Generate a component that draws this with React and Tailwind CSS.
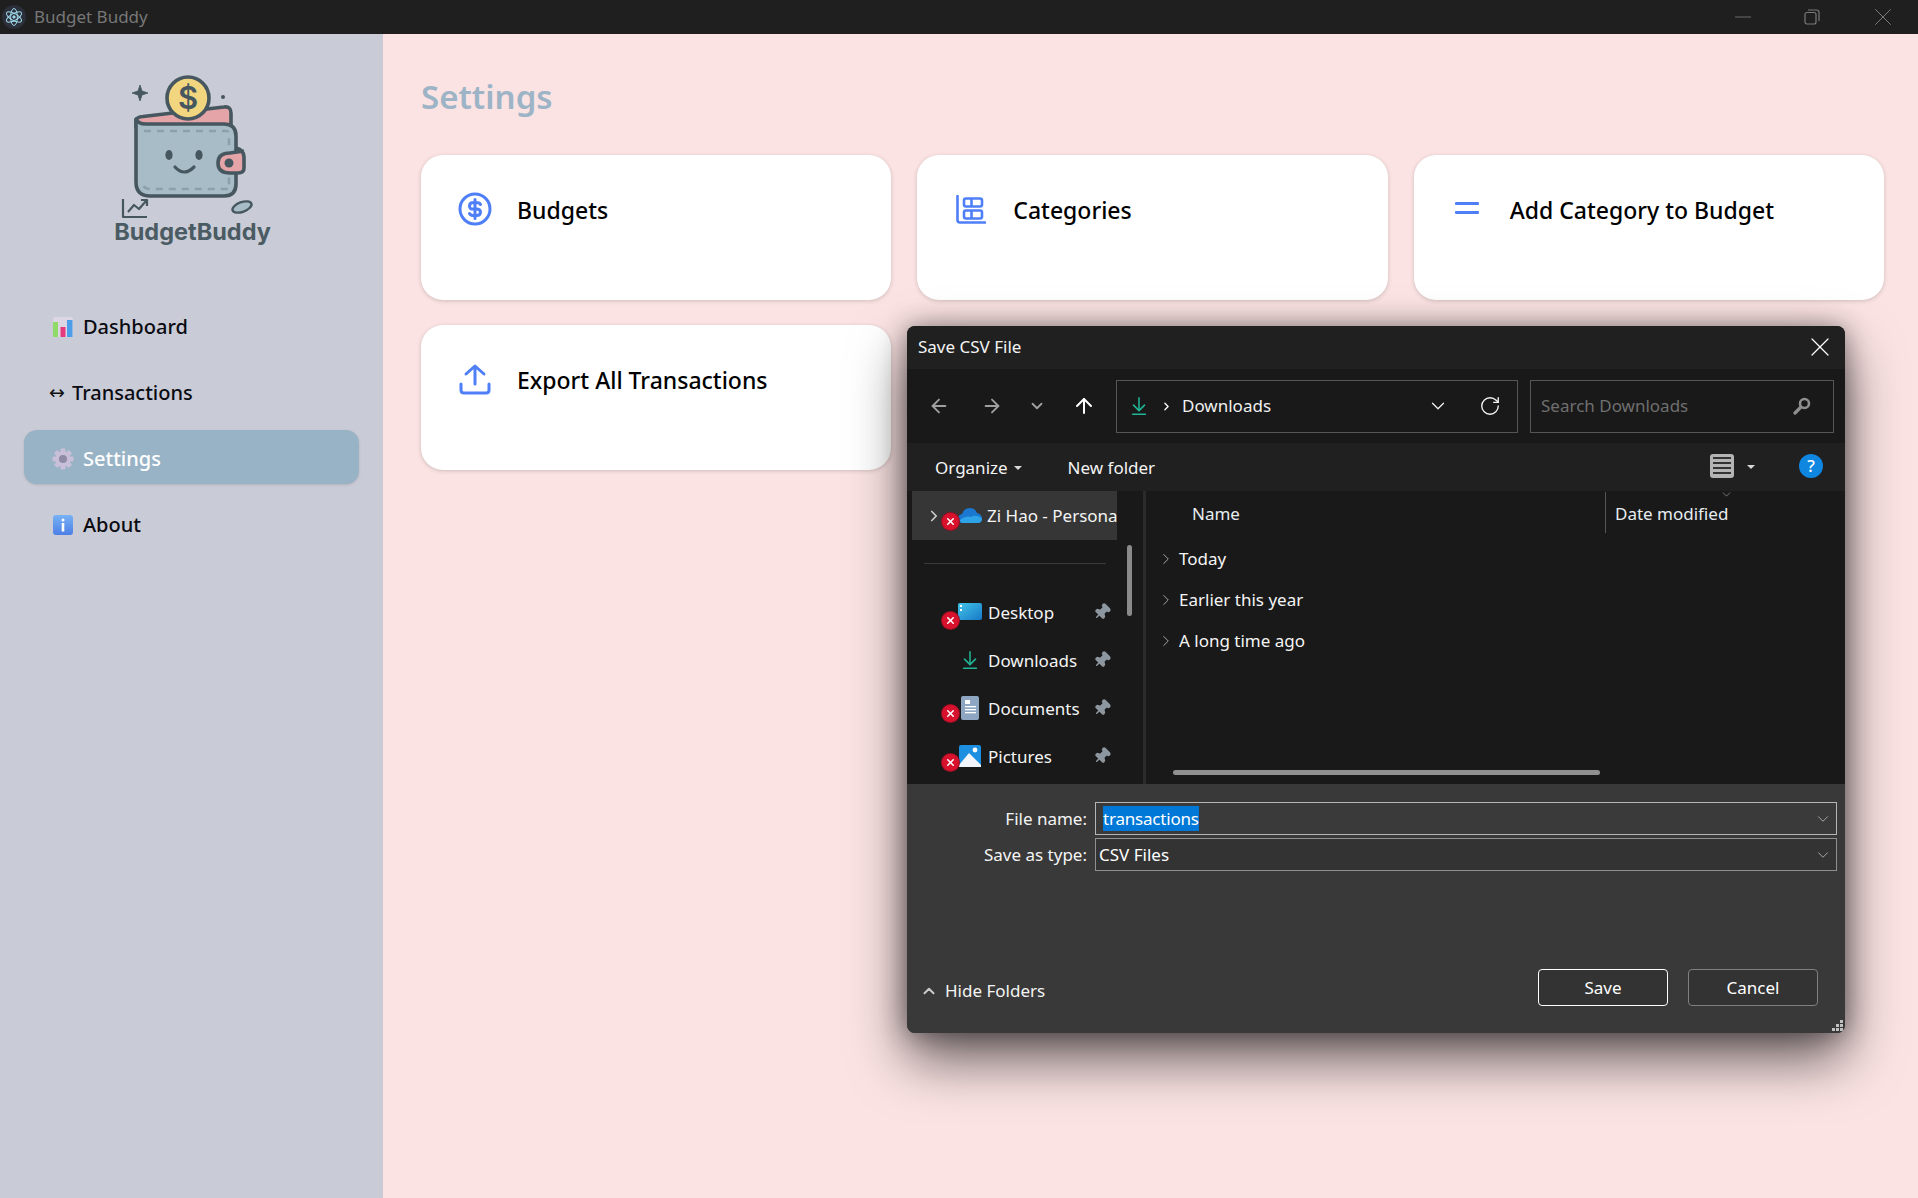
import React from "react";
import { ArrowLeft, ArrowRight, ArrowUp, ChevronDown, ChevronRight, ChevronUp, RotateCw, X, Minus, Pin, ArrowDownToLine } from "lucide-react";

const FONT = "font-['Noto_Sans','Open_Sans',sans-serif]";

function Logo() {
  const s = "#46575f";
  return (
    <svg width="136" height="148" viewBox="0 0 136 148" className="block">
      <path d="M20 12 L22 18 L28 20 L22 22 L20 28 L18 22 L12 20 L18 18 Z" fill={s} stroke={s} strokeWidth="0.8" strokeLinejoin="round" />
      <circle cx="103" cy="24" r="2" fill={s} />
      <path d="M16 47 Q17 44 23 43.5 L104 34 Q111 33 111 40 V54 H16 Z" fill="#e5a5a8" stroke={s} strokeWidth="3.6" strokeLinejoin="round" />
      <circle cx="68" cy="25" r="21" fill="#f2d57f" stroke={s} strokeWidth="3.6" />
      <text x="68" y="36" textAnchor="middle" fontFamily="Inter, sans-serif" fontSize="31" fontWeight="600" fill={s}>$</text>
      <path d="M16 46 Q18 51 26 51 H104 Q116 51 116 63 V111 Q116 123 104 123 H30 Q16 123 16 109 Z" fill="#a8bcc7" stroke={s} strokeWidth="3.6" strokeLinejoin="round" />
      <path d="M24 58 H106 Q109 58 109 61 V116 H30 Q23 116 23 110" fill="none" stroke="#8aa0aa" strokeWidth="2.6" strokeDasharray="7 6" />
      <ellipse cx="49" cy="82" rx="3.6" ry="5" fill={s} />
      <ellipse cx="79" cy="82" rx="3.6" ry="5" fill={s} />
      <path d="M55 94 Q64 104 74 94" fill="none" stroke={s} strokeWidth="3.2" strokeLinecap="round" />
      <path d="M116 75 Q124 77 124 84 V95 Q124 100 118 100 H110 Q98 100 98 90 Q98 80 110 80 L124 78" fill="#e5a5a8" stroke={s} strokeWidth="3.6" strokeLinejoin="round" />
      <circle cx="109" cy="90" r="4.5" fill={s} />
      <path d="M3 126 V144 H27 M8 139 L14 132 L19 136 L26 128 M21 127 H27 V133" fill="none" stroke={s} strokeWidth="2.2" strokeLinejoin="round" />
      <ellipse cx="122" cy="134" rx="10" ry="4.8" transform="rotate(-20 122 134)" fill="#a8bcc7" stroke={s} strokeWidth="2.4" />
    </svg>
  );
}

function BarEmoji() {
  return (
    <svg width="22" height="22" viewBox="0 0 22 22">
      <rect x="1" y="1" width="20" height="20" rx="2" fill="#dcd6e4" />
      <rect x="1" y="6" width="5" height="15" fill="#8edb6a" />
      <rect x="8.5" y="11" width="5" height="10" fill="#e5397f" />
      <rect x="15" y="4" width="5.5" height="17" fill="#4c9ee8" />
    </svg>
  );
}

function GearEmoji() {
  return (
    <svg width="22" height="22" viewBox="0 0 22 22">
      <g fill="#c9bfd8">
        {[0, 45, 90, 135, 180, 225, 270, 315].map((a) => (
          <rect key={a} x="8.5" y="0.5" width="5" height="6" rx="1.2" transform={`rotate(${a} 11 11)`} />
        ))}
      </g>
      <circle cx="11" cy="11" r="7.5" fill="#c9bfd8" />
      <circle cx="11" cy="11" r="4" fill="#8f8aa6" />
    </svg>
  );
}

function InfoEmoji() {
  return (
    <svg width="22" height="22" viewBox="0 0 22 22">
      <defs>
        <linearGradient id="ig" x1="0" y1="0" x2="0" y2="1">
          <stop offset="0" stopColor="#78b2f5" />
          <stop offset="1" stopColor="#4d7fe6" />
        </linearGradient>
      </defs>
      <rect x="1" y="1" width="20" height="20" rx="3" fill="url(#ig)" />
      <circle cx="11" cy="6" r="1.5" fill="#fff" />
      <rect x="9.7" y="9" width="2.6" height="8.5" fill="#fff" />
    </svg>
  );
}

function NavItem({ icon, label, active, narrow }) {
  return (
    <div className={`flex h-[54px] items-center rounded-[13px] pl-7 pt-[3px] ${narrow ? "gap-[7px]" : "gap-[9px]"} ${active ? "bg-[#99b3c6] text-white shadow-sm" : "text-[#0b0b12]"}`}>
      {icon}
      <span className="text-[20px] font-medium leading-none">{label}</span>
    </div>
  );
}

function Card({ icon, label }) {
  return (
    <div className="flex h-[145px] items-start gap-[23px] rounded-[22px] bg-white pl-[35px] pt-[36px] shadow-[0_1px_4px_rgba(0,0,0,0.18)]">
      <span className="-mt-[1px] flex h-[38px] w-[38px] items-center justify-center text-[#4f7ff7]">{icon}</span>
      <span className="text-[23px] font-medium leading-[38px] text-black">{label}</span>
    </div>
  );
}

function RedX({ top = "top-[9px]", left = "left-[-15px]" }) {
  return (
    <span className={`absolute ${left} ${top} flex h-[17px] w-[17px] items-center justify-center rounded-full bg-[#d8112d] text-white ring-1 ring-[#9a1024]`}>
      <X size={11} strokeWidth={3.4} />
    </span>
  );
}

function NavRow({ icon, label, bad }) {
  return (
    <div className="flex h-[48px] items-center">
      <span className="relative ml-[50px] flex w-[26px] items-center justify-center">
        {icon}
        {bad && <RedX />}
      </span>
      <span className="ml-[5px] w-[105px] text-[17px] leading-none text-[#f4f4f4]">{label}</span>
      <Pin size={18} className="rotate-45 fill-[#8d979f] text-[#8d979f]" />
    </div>
  );
}

function Group({ label }) {
  return (
    <div className="flex h-[41px] items-center gap-[4px] pl-[11px] text-[17px] text-[#f4f4f4]">
      <ChevronRight size={18} className="text-[#a8a8a8]" strokeWidth={1.3} />
      <span>{label}</span>
    </div>
  );
}

function Field({ label, children, focus }) {
  return (
    <div className="flex items-center">
      <span className="w-[186px] pr-[8px] text-right text-[17px] text-[#f4f4f4]">{label}</span>
      <div className={`flex h-[33px] w-[742px] items-center justify-between border pr-[4px] ${focus ? "border-[#b5b5b5] bg-[#3a3a3a]" : "border-[#8f8f8f] bg-[#333333]"}`}>
        {children}
        <ChevronDown size={18} strokeWidth={1.1} className="text-[#bdbdbd]" />
      </div>
    </div>
  );
}

function Dialog() {
  return (
    <div className={`absolute left-[907px] top-[326px] flex h-[707px] w-[938px] flex-col overflow-hidden rounded-[8px] bg-[#393939] shadow-[0_26px_55px_rgba(0,0,0,0.6),0_0_26px_rgba(0,0,0,0.38)] ${FONT}`}>
      <div className="flex h-[43px] shrink-0 items-center justify-between bg-[#202020] pb-[2px] pl-[11px] pr-[9px]">
        <span className="text-[17px] text-[#f4f4f4]">Save CSV File</span>
        <X size={32} strokeWidth={0.9} className="text-white" />
      </div>
      <div className="flex h-[74px] shrink-0 items-center bg-[#191919] pl-[21px]">
        <ArrowLeft size={22} strokeWidth={2} className="text-[#a0a0a0]" />
        <ArrowRight size={22} strokeWidth={2} className="ml-[31px] text-[#a0a0a0]" />
        <ChevronDown size={18} strokeWidth={2.4} className="ml-[25px] text-[#a0a0a0]" />
        <ArrowUp size={24} strokeWidth={2} className="ml-[26px] text-white" />
        <div className="ml-[20px] flex h-[53px] w-[402px] items-center border border-[#555555] pl-[11px] pr-[16px]">
          <ArrowDownToLine size={22} strokeWidth={1.7} className="text-[#1fb595]" />
          <ChevronRight size={13} strokeWidth={2.4} className="ml-[10px] text-white" />
          <span className="ml-[9px] flex-1 text-[17px] text-[#f0f0f0]">Downloads</span>
          <ChevronDown size={22} strokeWidth={1.4} className="text-[#f0f0f0]" />
          <RotateCw size={22} strokeWidth={1.5} className="ml-[30px] text-[#f0f0f0]" />
        </div>
        <div className="ml-[12px] flex h-[53px] w-[304px] items-center justify-between border border-[#555555] pl-[10px] pr-[22px]">
          <span className="text-[17px] text-[#6f6f6f]">Search Downloads</span>
          <svg width="18" height="18" viewBox="0 0 18 18" fill="none" stroke="#8f8f8f" strokeLinecap="round">
            <circle cx="11.5" cy="6.5" r="4.5" strokeWidth="2.6" />
            <path d="M7.5 10.5 L2 16" strokeWidth="3.2" />
          </svg>
        </div>
      </div>
      <div className="flex h-[48px] shrink-0 items-center bg-[#202020] pl-[28px] pr-[22px] pt-[2px] text-[17px] text-[#f4f4f4]">
        <span>Organize</span>
        <span className="ml-[6px] h-0 w-0 border-x-[4px] border-t-[4px] border-x-transparent border-t-[#d8d8d8]" />
        <span className="ml-[46px] flex-1">New folder</span>
        <span className="-mt-[5px] flex h-[24px] w-[24px] flex-col justify-center gap-[3px] rounded-[3px] bg-[#b4b4b4] px-[3px]">
          <span className="h-[2px] bg-[#333333]" />
          <span className="h-[2px] bg-[#333333]" />
          <span className="h-[2px] bg-[#333333]" />
          <span className="h-[2px] bg-[#333333]" />
        </span>
        <span className="-mt-[3px] ml-[13px] h-0 w-0 border-x-[4px] border-t-[4px] border-x-transparent border-t-[#d8d8d8]" />
        <span className="-mt-[5px] ml-[44px] flex h-[24px] w-[24px] items-center justify-center rounded-full bg-[#0f86e0] text-[17px] font-medium text-white">?</span>
      </div>
      <div className="flex h-[293px] shrink-0 bg-[#191919]">
        <div className="relative w-[239px] shrink-0">
          <div className="ml-[5px] flex h-[49px] w-[205px] items-center overflow-hidden whitespace-nowrap bg-[#363636]">
            <ChevronRight size={18} strokeWidth={2.2} className="ml-[13px] shrink-0 text-[#d0d0d0]" />
            <span className="relative ml-[15px] flex w-[24px] shrink-0 items-center justify-center">
              <svg width="24" height="16" viewBox="0 0 24 16">
                <path d="M5 15 Q0 15 0 10.5 Q0 7 4 6 Q6 0 12 0 Q17 0 19 5 Q24 6 24 10.5 Q24 15 19 15 Z" fill="#1b78d0" />
                <path d="M5 15 Q2 15 2 12 Q8 7 13 9 Q19 6 24 10.5 Q24 15 19 15 Z" fill="#2ea3e8" />
              </svg>
            </span>
            <span className="ml-[5px] text-[17px] text-[#f4f4f4]">Zi Hao - Personal</span>
          </div>
          <span className="absolute left-[51px] top-0 block h-[49px] w-[24px]">
            <RedX left="left-[-16px]" top="top-[22px]" />
          </span>
          <div className="ml-[17px] mt-[23px] h-[1px] w-[182px] bg-[#3a3a3a]" />
          <div className="mt-[24px]">
            <NavRow bad label="Desktop" icon={
              <svg width="24" height="18" viewBox="0 0 24 18"><defs><linearGradient id="dk" x1="0" y1="0" x2="1" y2="1"><stop offset="0" stopColor="#42c4e6" /><stop offset="1" stopColor="#1778c8" /></linearGradient></defs><rect width="24" height="17" rx="2" fill="url(#dk)" /><rect x="2" y="2" width="2" height="2" fill="#fff" /><rect x="2" y="6" width="2" height="2" fill="#fff" /></svg>
            } />
            <NavRow label="Downloads" icon={<ArrowDownToLine size={22} strokeWidth={1.7} className="text-[#1fb595]" />} />
            <NavRow bad label="Documents" icon={
              <svg width="18" height="24" viewBox="0 0 18 24"><rect width="18" height="24" rx="2" fill="#8ea6c2" /><rect x="4" y="4" width="5" height="4" fill="#fff" /><rect x="4" y="10" width="11" height="1.3" fill="#fff" /><rect x="4" y="13" width="11" height="1.3" fill="#fff" /><rect x="4" y="16" width="11" height="1.3" fill="#fff" /></svg>
            } />
            <NavRow bad label="Pictures" icon={
              <svg width="22" height="22" viewBox="0 0 22 22"><rect width="22" height="22" rx="2" fill="#1c8fe0" /><circle cx="16" cy="5" r="2.4" fill="#fff" /><path d="M0 20 L10 8 L22 20 V22 H0 Z" fill="#f2f6fa" /></svg>
            } />
          </div>
          <div className="absolute left-[220px] top-[54px] h-[71px] w-[5px] rounded-full bg-[#8a8a8a]" />
          <div className="absolute right-0 top-0 h-full w-[3px] bg-[#2b2b2b]" />
        </div>
        <div className="relative flex-1">
          <div className="flex h-[48px] items-start text-[17px] leading-[26px] text-[#e8edf2]">
            <span className="ml-[46px] w-[413px] pt-[10px]">Name</span>
            <span className="mt-[1px] h-[41px] border-l border-[#555555] pl-[9px] pt-[9px]">Date modified</span>
          </div>
          <ChevronDown size={13} strokeWidth={1} className="absolute left-[574px] top-[-3px] text-[#bdbdbd]" />
          <div className="-mt-[1px]">
            <Group label="Today" />
            <Group label="Earlier this year" />
            <Group label="A long time ago" />
          </div>
          <div className="absolute bottom-[9px] left-[27px] h-[5px] w-[427px] rounded-full bg-[#909090]" />
        </div>
      </div>
      <div className="relative flex flex-1 flex-col bg-[#393939] pl-[2px] pt-[18px]">
        <div className="flex flex-col gap-[3px]">
          <Field focus label="File name:">
            <span className="ml-[7px] bg-[#0078d7] text-[17px] leading-[25px] tracking-[-0.2px] text-white">transactions</span>
          </Field>
          <Field label="Save as type:">
            <span className="ml-[3px] text-[17px] text-white">CSV Files</span>
          </Field>
        </div>
        <div className="mt-auto flex items-center pb-[27px] pl-[11px] pr-[27px]">
          <ChevronUp size={18} strokeWidth={2.8} className="mt-[6px] text-[#c8c8c8]" />
          <span className="ml-[7px] mt-[6px] flex-1 text-[17px] text-[#f4f4f4]">Hide Folders</span>
          <button className="h-[37px] w-[130px] rounded-[4px] border border-white bg-[#333333] pt-[1px] text-[17px] text-white">Save</button>
          <button className="ml-[20px] h-[37px] w-[130px] rounded-[4px] border border-[#808080] bg-[#333333] pt-[1px] text-[17px] text-white">Cancel</button>
        </div>
        <svg width="11" height="11" viewBox="0 0 11 11" className="absolute bottom-[2px] right-[2px]" fill="#c0c0c0">
          <rect x="8" y="0" width="3" height="3" /><rect x="4" y="4" width="3" height="3" /><rect x="8" y="4" width="3" height="3" /><rect x="0" y="8" width="3" height="3" /><rect x="4" y="8" width="3" height="3" /><rect x="8" y="8" width="3" height="3" />
        </svg>
      </div>
    </div>
  );
}

export default function App() {
  return (
    <div className={`relative flex h-[1198px] w-[1918px] flex-col overflow-hidden ${FONT}`}>
      <div className="flex h-[34px] shrink-0 items-center bg-[#1f1f1f]">
        <span className="ml-[2px] flex h-[24px] w-[24px] items-center justify-center rounded-full bg-[#2b2f3a]">
          <svg width="20" height="20" viewBox="0 0 20 20" fill="none" stroke="#9fd8ea" strokeWidth="1">
            <ellipse cx="10" cy="10" rx="8.5" ry="3.4" transform="rotate(30 10 10)" />
            <ellipse cx="10" cy="10" rx="8.5" ry="3.4" transform="rotate(90 10 10)" />
            <ellipse cx="10" cy="10" rx="8.5" ry="3.4" transform="rotate(150 10 10)" />
            <circle cx="10" cy="10" r="1.2" fill="#9fd8ea" />
          </svg>
        </span>
        <span className="ml-[8px] text-[17px] text-[#777777]">Budget Buddy</span>
        <div className="ml-auto flex items-center text-[#7a7a7a]">
          <Minus size={26} strokeWidth={0.8} className="mr-[48px]" />
          <svg width="16" height="16" viewBox="0 0 16 16" fill="none" stroke="currentColor" strokeWidth="1.2" className="mr-[48px]">
            <rect x="1" y="3.5" width="11" height="11.5" rx="2" />
            <path d="M4 1 H12.5 Q15 1 15 3.5 V12" />
          </svg>
          <X size={30} strokeWidth={0.8} className="mr-[20px]" />
        </div>
      </div>
      <div className="flex min-h-0 flex-1">
        <aside className="flex w-[383px] shrink-0 flex-col items-center bg-[#c9ccd6] px-[24px]">
          <div className="ml-[-7px] mt-[39px]"><Logo /></div>
          <div className="ml-[2px] mt-[-5px] font-['Inter',sans-serif] text-[23.5px] font-bold leading-[32px] text-[#4a5b63]">BudgetBuddy</div>
          <nav className="mt-[50px] flex w-full flex-col gap-[12px]">
            <NavItem icon={<BarEmoji />} label="Dashboard" />
            <NavItem narrow icon={<span className="-ml-[3px] font-['DejaVu_Sans',sans-serif] text-[19px] leading-none text-[#111]">↔</span>} label="Transactions" />
            <NavItem active icon={<GearEmoji />} label="Settings" />
            <NavItem icon={<InfoEmoji />} label="About" />
          </nav>
        </aside>
        <main className="min-w-0 flex-1 bg-[#fbe3e3] pl-[38px] pr-[34px] pt-[40px]">
          <h1 className="text-[33px] font-semibold leading-[46px] text-[#9db4c6]">Settings</h1>
          <div className="mt-[35px] grid grid-cols-3 gap-[26px] gap-y-[25px]">
            <Card label="Budgets" icon={
              <svg width="34" height="34" viewBox="0 0 34 34" fill="none" stroke="currentColor" strokeWidth="3" strokeLinecap="round">
                <circle cx="17" cy="17" r="15" />
                <path d="M22.5 12.5 Q21.5 10.5 18.5 10.5 H15.5 Q11.5 10.5 11.5 14 T15.5 17 H18.5 Q22.5 17 22.5 20.2 T18.5 23.5 H15.5 Q12.5 23.5 11.5 21.5 M17 7.5 V26.5" />
              </svg>
            } />
            <Card label="Categories" icon={
              <svg width="30" height="29" viewBox="0 0 30 29" fill="none" stroke="currentColor" strokeWidth="2.6" strokeLinecap="round" strokeLinejoin="round">
                <path d="M1.5 1 V25 Q1.5 27.5 4 27.5 H29" />
                <rect x="8" y="3.5" width="18" height="8" rx="2" />
                <rect x="8" y="15.5" width="18" height="8" rx="2" />
                <path d="M15.5 4 V11 M15.5 16 V23" strokeLinecap="butt" />
              </svg>
            } />
            <Card label="Add Category to Budget" icon={
              <svg width="26" height="14" viewBox="0 0 26 14" fill="currentColor"><rect y="0" width="24" height="3" rx="1" /><rect y="9" width="24" height="3" rx="1" /></svg>
            } />
            <Card label="Export All Transactions" icon={
              <svg width="32" height="32" viewBox="0 0 32 32" fill="none" stroke="currentColor" strokeWidth="3" strokeLinecap="round" strokeLinejoin="round">
                <path d="M16 21 V3 M7 11 L16 3 L25 11 M2 21 V27 Q2 30 5 30 H27 Q30 30 30 27 V21" />
              </svg>
            } />
          </div>
        </main>
      </div>
      <Dialog />
    </div>
  );
}
